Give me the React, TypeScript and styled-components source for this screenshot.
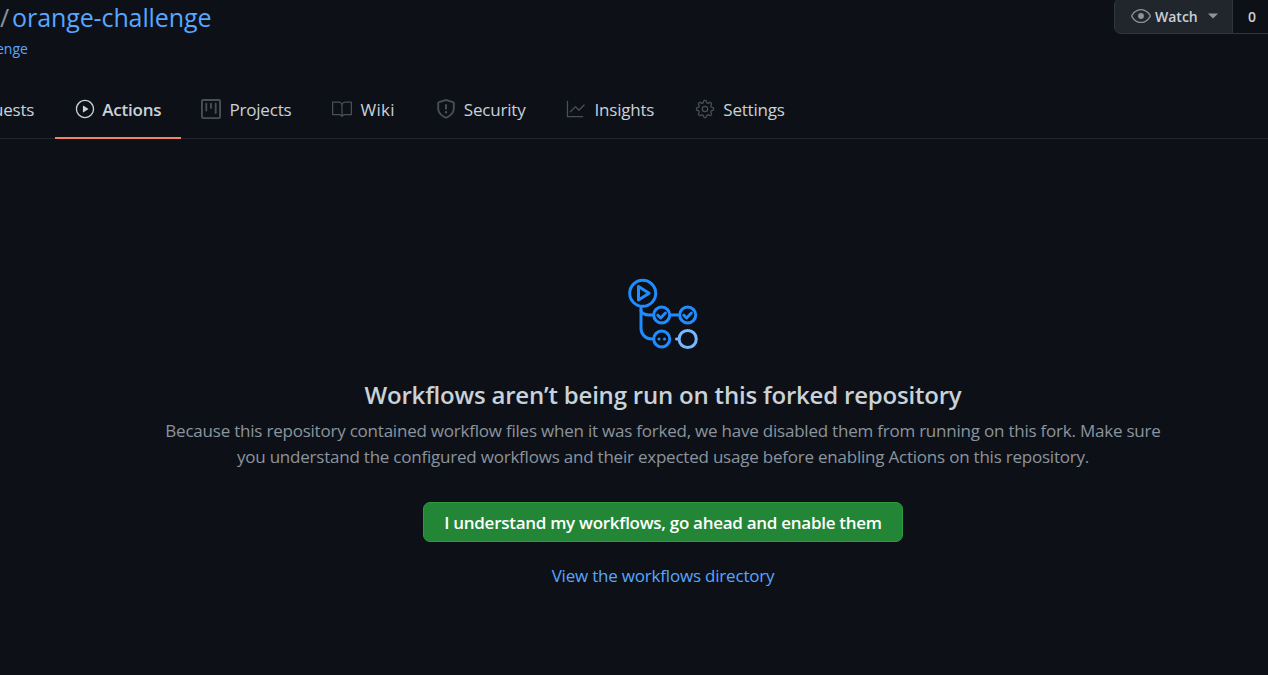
import React from "react";
import styled, { createGlobalStyle } from "styled-components";
import { GoBook, GoEye, GoGear, GoGraph, GoPlay, GoTriangleDown } from "react-icons/go";

const GlobalStyle = createGlobalStyle`
  html, body {
    margin: 0;
    height: 100%;
    background-color: #0d1117;
    overflow: hidden;
  }
  body {
    font-family: "Open Sans", "Noto Sans", sans-serif;
    color: #c9d1d9;
  }
`;

const Page = styled.div`
  width: 1326px;
  height: 675px;
  background-color: #0d1117;
  display: flex;
  flex-direction: column;
`;

const RepoHead = styled.header`
  display: flex;
  justify-content: space-between;
  align-items: flex-start;
  height: 89px;
`;

const TitleBlock = styled.div`
  display: flex;
  flex-direction: column;
`;

const RepoTitle = styled.h1`
  margin: -1px 0 1px;
  font-size: 25px;
  line-height: 36px;
  font-weight: 500;
  color: #58a6ff;
  letter-spacing: -0.1px;
  white-space: nowrap;
`;

const Slash = styled.span`
  color: #8b949e;
  margin-right: 3px;
`;

const ForkedFrom = styled.a`
  margin-left: -4px;
  font-size: 14px;
  line-height: 26px;
  color: #58a6ff;
`;

const WatchGroup = styled.div`
  display: flex;
  margin-top: -2px;
  margin-right: 54px;
`;

const WatchButton = styled.button`
  width: 119px;
  height: 36px;
  box-sizing: border-box;
  display: flex;
  align-items: center;
  gap: 4px;
  padding: 0 0 0 16px;
  background-color: #21262d;
  border: 1px solid #30363d;
  border-radius: 7px 0 0 7px;
  color: #c9d1d9;
  font-family: inherit;
  font-size: 14px;
  font-weight: 600;
  svg {
    color: #8b949e;
  }
`;

const Caret = styled.span`
  display: flex;
  margin-left: 2px;
`;

const WatchCount = styled.div`
  width: 39px;
  height: 36px;
  box-sizing: border-box;
  display: flex;
  align-items: center;
  justify-content: center;
  border: 1px solid #30363d;
  border-left: 0;
  font-size: 14px;
  font-weight: 600;
  color: #c9d1d9;
`;

const TabBar = styled.nav`
  display: flex;
  gap: 1px;
  height: 50px;
  box-sizing: border-box;
  border-bottom: 1px solid #21262d;
`;

const Tab = styled.a<{ $active?: boolean; $clipped?: boolean }>`
  display: flex;
  align-items: center;
  gap: ${(p) => (p.$active ? "7px" : "8px")};
  box-sizing: border-box;
  height: 50px;
  padding: ${(p) => (p.$clipped ? "0 20px 8px 0" : "0 20px 8px")};
  margin-left: ${(p) => (p.$clipped ? "-7px" : "0")};
  margin-right: ${(p) => (p.$active ? "-1px" : "0")};
  border-bottom: 2px solid ${(p) => (p.$active ? "#f78166" : "transparent")};
  color: #c9d1d9;
  font-size: 17px;
  font-weight: ${(p) => (p.$active ? 600 : 400)};
  letter-spacing: -0.2px;
  white-space: nowrap;
  svg {
    color: ${(p) => (p.$active ? "#c9d1d9" : "#484f58")};
    flex: none;
  }
`;

const WideLabel = styled.span`
  letter-spacing: 0.3px;
`;

const Blank = styled.main`
  display: flex;
  flex-direction: column;
  align-items: center;
  padding-top: 137px;
`;

const WorkflowArt = styled.svg`
  display: block;
`;

const Heading = styled.h2`
  margin: 24px 0 0;
  font-size: 24px;
  line-height: 34px;
  font-weight: 600;
  color: #c9d1d9;
  letter-spacing: -0.2px;
`;

const Description = styled.p`
  margin: 6px 0 0;
  width: 1010px;
  text-align: center;
  font-size: 17px;
  line-height: 26px;
  color: #8b949e;
  letter-spacing: -0.22px;
`;

const EnableButton = styled.button`
  width: 480px;
  height: 40px;
  margin-top: 32px;
  padding: 0;
  background-color: #238636;
  border: 1px solid #2e9a40;
  border-radius: 7px;
  color: #ffffff;
  font-family: inherit;
  font-size: 17px;
  font-weight: 600;
  letter-spacing: -0.28px;
`;

const DirectoryLink = styled.a`
  margin-top: 21px;
  font-size: 17px;
  line-height: 26px;
  color: #58a6ff;
  letter-spacing: -0.2px;
`;

const ProjectIcon = () => (
  <svg width="20" height="20" viewBox="0 0 16 16" fill="currentColor">
    <path
      fillRule="evenodd"
      d="M1.75 0A1.75 1.75 0 000 1.75v12.5C0 15.216.784 16 1.75 16h12.5A1.75 1.75 0 0016 14.25V1.75A1.75 1.75 0 0014.25 0H1.75zM1.5 1.75a.25.25 0 01.25-.25h12.5a.25.25 0 01.25.25v12.5a.25.25 0 01-.25.25H1.75a.25.25 0 01-.25-.25V1.75zM11.75 3a.75.75 0 00-.75.75v7.5a.75.75 0 001.5 0v-7.5a.75.75 0 00-.75-.75zm-8.25.75a.75.75 0 011.5 0v5.5a.75.75 0 01-1.5 0v-5.5zM8 3a.75.75 0 00-.75.75v3.5a.75.75 0 001.5 0v-3.5A.75.75 0 008 3z"
    />
  </svg>
);

const ShieldIcon = () => (
  <svg width="20" height="20" viewBox="0 0 16 16" fill="currentColor">
    <path
      fillRule="evenodd"
      d="M7.467.133a1.75 1.75 0 011.066 0l5.25 1.68A1.75 1.75 0 0115 3.48V7c0 1.566-.32 3.182-1.303 4.682-.983 1.498-2.585 2.813-5.032 3.855a1.7 1.7 0 01-1.33 0c-2.447-1.042-4.049-2.357-5.032-3.855C1.32 10.182 1 8.566 1 7V3.48a1.75 1.75 0 011.217-1.667l5.25-1.68zm.61 1.429a.25.25 0 00-.153 0l-5.25 1.68a.25.25 0 00-.174.238V7c0 1.358.275 2.666 1.057 3.86.784 1.194 2.121 2.34 4.366 3.297a.2.2 0 00.154 0c2.245-.956 3.582-2.104 4.366-3.298C13.225 9.666 13.5 8.36 13.5 7V3.48a.25.25 0 00-.174-.237l-5.25-1.68zM9 10.5a1 1 0 11-2 0 1 1 0 012 0zm-.25-5.75a.75.75 0 10-1.5 0v3a.75.75 0 001.5 0v-3z"
    />
  </svg>
);

// drawn in page coordinates, the viewBox starts where the art starts
const WorkflowIcon = () => (
  <WorkflowArt width="75" height="78" viewBox="626 276 75 78" fill="none" strokeWidth="3" strokeLinecap="round" strokeLinejoin="round">
    <g stroke="#1f8cff">
      <circle cx="642.7" cy="293.3" r="13" />
      <path d="M638.5 286.5v13.6l10.6-6.8z" />
      <path d="M641 306.5V328.5a10.5 10.5 0 0 0 10.5 10.5h1.8" />
      <path d="M641 310.5a8 4.5 0 0 0 8 4.5h4.2" />
      <circle cx="661.7" cy="315" r="8" />
      <path d="M657.8 315.2l2.8 2.8 4.8-5" />
      <path d="M670 315h9.5" />
      <circle cx="687.7" cy="315" r="8" />
      <path d="M683.8 315.2l2.8 2.8 4.8-5" />
      <circle cx="661.7" cy="339" r="8" />
      <path d="M659 339h.01M664.5 339h.01" />
    </g>
    <g stroke="#79b8ff">
      <path d="M676.5 339h1.5" />
      <circle cx="687.7" cy="339" r="8.6" />
    </g>
  </WorkflowArt>
);

const App = () => (
  <Page>
    <GlobalStyle />
    <RepoHead>
      <TitleBlock>
        <RepoTitle>
          <Slash>/</Slash>orange-challenge
        </RepoTitle>
        <ForkedFrom>enge</ForkedFrom>
      </TitleBlock>
      <WatchGroup>
        <WatchButton>
          <GoEye size={20} />
          Watch
          <Caret>
            <GoTriangleDown size={18} />
          </Caret>
        </WatchButton>
        <WatchCount>0</WatchCount>
      </WatchGroup>
    </RepoHead>
    <TabBar>
      <Tab $clipped>uests</Tab>
      <Tab $active>
        <GoPlay size={20} />
        Actions
      </Tab>
      <Tab>
        <ProjectIcon />
        Projects
      </Tab>
      <Tab>
        <GoBook size={20} />
        <WideLabel>Wiki</WideLabel>
      </Tab>
      <Tab>
        <ShieldIcon />
        Security
      </Tab>
      <Tab>
        <GoGraph size={20} />
        Insights
      </Tab>
      <Tab>
        <GoGear size={20} />
        Settings
      </Tab>
    </TabBar>
    <Blank>
      <WorkflowIcon />
      <Heading>Workflows aren’t being run on this forked repository</Heading>
      <Description>
        Because this repository contained workflow files when it was forked, we have disabled them from running on this fork. Make sure you understand the configured workflows and their expected usage before enabling Actions on this repository.
      </Description>
      <EnableButton>I understand my workflows, go ahead and enable them</EnableButton>
      <DirectoryLink>View the workflows directory</DirectoryLink>
    </Blank>
  </Page>
);

export default App;
